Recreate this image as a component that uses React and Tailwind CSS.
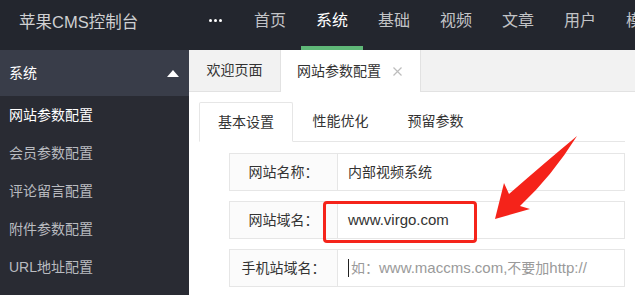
import React from 'react'

const navItems = ['首页', '系统', '基础', '视频', '文章', '用户', '模板']
const sideItems = ['网站参数配置', '会员参数配置', '评论留言配置', '附件参数配置', 'URL地址配置']
const subTabs = ['基本设置', '性能优化', '预留参数']

function Row({ label, children }) {
  return (
    <div className="flex h-[38px] mb-[10px] relative">
      <div className="w-[109px] shrink-0 border border-[#e6e6e6] bg-[#fbfbfb] flex items-center justify-center text-[14px] text-[#333]">
        {label}
      </div>
      <div className="flex-1 border border-l-0 border-[#e6e6e6] bg-white flex items-center pl-[10px] text-[14px] text-[#333] whitespace-nowrap overflow-hidden">
        {children}
      </div>
    </div>
  )
}

export default function App() {
  return (
    <div className="relative w-[635px] h-[295px] overflow-hidden flex flex-col bg-white font-['Liberation_Sans','Noto_Sans_CJK_SC',sans-serif]">
      <header className="h-[50px] shrink-0 bg-[#23262e] flex">
        <div className="w-[192px] shrink-0 pl-[19px] leading-[44px] text-[16.5px] text-[#cfd0d2] whitespace-nowrap">
          苹果CMS控制台
        </div>
        <div className="w-[47px] shrink-0 flex justify-center pt-[19px]">
          <div className="flex gap-[2px]">
            <span className="w-[3px] h-[3px] bg-white rounded-full" />
            <span className="w-[3px] h-[3px] bg-white rounded-full" />
            <span className="w-[3px] h-[3px] bg-white rounded-full" />
          </div>
        </div>
        {navItems.map((n) => {
          const active = n === '系统'
          return (
            <div key={n} className="w-[62px] shrink-0 flex flex-col justify-between">
              <div className={`text-center leading-[42px] text-[16px] whitespace-nowrap ${active ? 'text-white' : 'text-[#c2c3c6]'}`}>
                {n}
              </div>
              <div className={`h-[4px] ${active ? 'bg-[#5fb878]' : ''}`} />
            </div>
          )
        })}
      </header>

      <div className="flex flex-1 min-h-0">
        <aside className="w-[189px] shrink-0 bg-[#292b33]">
          <div className="h-[46px] bg-[#393d49] flex items-center justify-between pl-[9px] pr-[10px]">
            <span className="text-[14px] text-white">系统</span>
            <svg width="12" height="7" viewBox="0 0 12 7">
              <path d="M0 7 L6 0 L12 7 Z" fill="#fff" />
            </svg>
          </div>
          {sideItems.map((s, i) => (
            <div
              key={s}
              className={`h-[38px] pl-[9px] flex items-center text-[14px] ${i === 0 ? 'text-white' : 'text-[#b9bbc0]'}`}
            >
              {s}
            </div>
          ))}
        </aside>

        <main className="flex-1 min-w-0 flex flex-col">
          <div className="h-[42px] shrink-0 flex">
            <div className="w-[92px] shrink-0 bg-[#f2f2f2] border-r border-b border-[#e2e2e2] flex items-center justify-center text-[14px] text-[#333]">
              欢迎页面
            </div>
            <div className="w-[139px] shrink-0 bg-white flex items-center pl-[16px] text-[14px] text-[#333]">
              网站参数配置
              <svg className="ml-[12px]" width="9" height="9" viewBox="0 0 9 9">
                <path d="M0.5 0.5 L8.5 8.5 M8.5 0.5 L0.5 8.5" stroke="#bdbdbd" strokeWidth="1.2" />
              </svg>
            </div>
            <div className="flex-1 bg-[#f2f2f2] border-l border-b border-[#e2e2e2]" />
          </div>

          <div className="px-[10px] pt-[10px]">
            <div className="h-[40px] flex border-b border-[#e6e6e6]">
              {subTabs.map((t, i) => (
                <div
                  key={t}
                  className={`shrink-0 flex items-center justify-center text-[14px] text-[#333] ${
                    i === 0
                      ? 'w-[94px] bg-white border border-[#e6e6e6] border-b-white -mb-px rounded-t-[2px]'
                      : 'w-[95px]'
                  }`}
                >
                  {t}
                </div>
              ))}
            </div>

            <div className="mt-[11px] pl-[30px]">
              <Row label="网站名称：">内部视频系统</Row>
              <Row label="网站域名：">
                <span className="text-[15px]">www.virgo.com</span>
                <div className="absolute left-[94px] top-0 w-[154px] h-[42px] border-[3px] border-[#f5241b] rounded-[4px]" />
              </Row>
              <Row label="手机站域名：">
                <span className="w-px h-[18px] bg-[#222] mr-[2px]" />
                <span className="text-[#9a9a9a]">
                  如：<span className="text-[15px]">www.maccms.com,</span>不要加<span className="text-[15px]">http://</span>
                </span>
              </Row>
            </div>
          </div>
        </main>
      </div>

      <svg className="absolute left-0 top-0 pointer-events-none" width="635" height="295" viewBox="0 0 635 295">
        <path
          d="M577 136 Q552 176 520 206 L530 209 L495 219 L504 183 L509 194 Q548 160 577 136 Z"
          fill="#f5231a"
        />
      </svg>
    </div>
  )
}
